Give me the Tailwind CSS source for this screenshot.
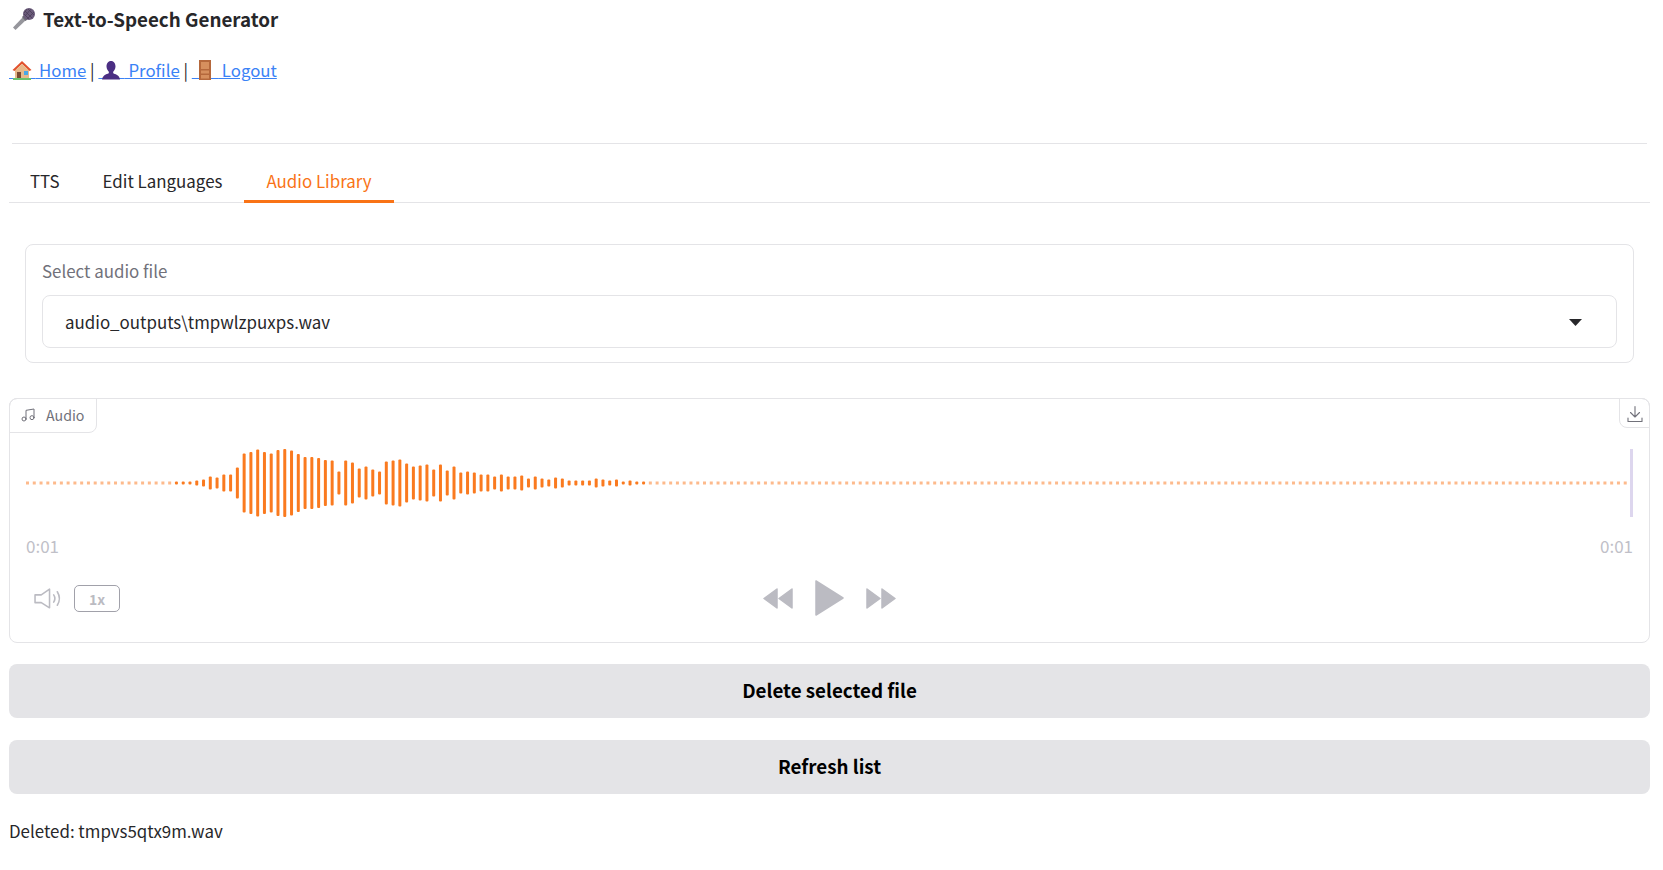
<!DOCTYPE html>
<html lang="en">
<head>
    <meta charset="UTF-8">
    <title>Text-to-Speech Generator</title>
    <script src="https://cdn.jsdelivr.net/npm/@tailwindcss/browser@4"></script>
</head>
<body class="bg-white text-[#27272a] font-['Noto_Sans_CJK_SC','Source_Sans_Pro',sans-serif] text-[16.9px] leading-[24px]">
    <div class="pl-[9px] pr-[13px]">
        <header class="h-[143px]">
            <h1 class="flex items-center h-[37px] pl-[3px] text-[18.8px] font-semibold text-[#27272a]">
                <svg class="w-[24px] h-[24px] mr-[7px]" viewBox="0 0 24 24">
                    <path d="M11 10 L1 20.5 L3.5 23 L14 13 Z" fill="#96969c"/>
                    <path d="M11.5 8.5 L15.5 12.5 L13.5 14 L10 10 Z" fill="#6b6b73"/>
                    <circle cx="17" cy="7" r="6" fill="#6b5b7b"/>
                    <path d="M13 4 L20 11 M16 2 L22 8 M12 7 L17 12 M15 2 L12 6 M19 2 L13 9 M22 5 L15 12" stroke="#4a3f58" stroke-width="0.8"/>
                </svg>
                Text-to-Speech Generator
            </h1>
            <p class="mt-[21px] text-[16.8px] leading-[24px] whitespace-pre"><a href="#" class="text-[#3b82f6] underline"><span class="relative">&nbsp;&nbsp;&nbsp;&nbsp;&nbsp;&nbsp;&nbsp;<svg class="absolute left-[3px] top-[2px] w-[20px] h-[20px]" viewBox="0 0 20 20">
                    <path d="M3 9 H17 V18 H3 Z" fill="#e8b98a"/>
                    <path d="M0.5 10 L10 1 L19.5 10 L17.5 11 L10 4 L2.5 11 Z" fill="#e2512d"/>
                    <path d="M10 4 L3 10.5 H17 Z" fill="#e8b98a"/>
                    <path d="M5 12 H9 V18 H5 Z" fill="#7a4b32"/>
                    <path d="M12 11 H16 V15 H12 Z" fill="#4aa8e8"/>
                    <path d="M1 18 H19 V20 H1 Z" fill="#6cc26c"/>
                </svg></span> Home</a><span> | </span><a href="#" class="text-[#3b82f6] underline"><span class="relative">&nbsp;&nbsp;&nbsp;&nbsp;&nbsp;&nbsp;&nbsp;<svg class="absolute left-[3px] top-[2px] w-[20px] h-[20px]" viewBox="0 0 20 20">
                    <path d="M10 1 C13 1 14.5 3.5 14.5 6.5 C14.5 9 13 11 12 12 L12.5 13.5 C16 14.5 18.5 16 19 19.5 H1 C1.5 16 4 14.5 7.5 13.5 L8 12 C7 11 5.5 9 5.5 6.5 C5.5 3.5 7 1 10 1 Z" fill="#4b2e83"/>
                </svg></span> Profile</a><span> | </span><a href="#" class="text-[#3b82f6] underline"><span class="relative">&nbsp;&nbsp;&nbsp;&nbsp;&nbsp;&nbsp;&nbsp;<svg class="absolute left-[3px] top-[2px] w-[20px] h-[20px]" viewBox="0 0 20 20">
                    <path d="M4 0 H16 V20 H4 Z" fill="#b5683c"/>
                    <path d="M6 2 H14 V9 H6 Z M6 10.5 H14 V13.5 H6 Z M6 15 H14 V18.5 H6 Z" fill="#d68f5e"/>
                </svg></span> Logout</a></p>
        </header>
        <div class="ml-[3px] mr-[3px] h-px bg-[#e4e4e7]"></div>

        <nav class="mt-[19px] h-[40px] flex border-b border-[#e4e4e7]">
            <button class="px-[21px] h-[36px] text-[#27272a]">TTS</button>
            <button class="px-[22px] h-[36px] text-[#27272a]">Edit Languages</button>
            <button class="px-[22px] h-[40px] pb-[2px] text-[#f97316] border-b-[3px] border-[#f97316]">Audio Library</button>
        </nav>

        <section class="mt-[41px] mx-[16px] h-[119px] border border-[#e4e4e7] rounded-[8px] px-[16px] pt-[14px]">
            <label class="block leading-[24px] text-[#71717a]">Select audio file</label>
            <div class="mt-[12px] h-[53px] border border-[#e4e4e7] rounded-[8px] pl-[22px] pr-[34px] flex items-center justify-between text-[#27272a]">
                <span>audio_outputs\tmpwlzpuxps.wav</span>
                <svg class="mt-[2px] w-[13px] h-[7px]" viewBox="0 0 13 7"><path d="M0 0 H13 L6.5 7 Z" fill="#27272a"/></svg>
            </div>
        </section>

        <section class="relative mt-[35px] h-[245px] border border-[#e4e4e7] rounded-[8px]">
            <div class="absolute -left-px -top-px h-[35px] w-[88px] pb-[1px] border border-[#e4e4e7] rounded-tl-[8px] rounded-br-[8px] flex items-center gap-[10px] pl-[10px] text-[14.2px] text-[#71717a]">
                <svg class="w-[16px] h-[16px]" viewBox="0 0 24 24" fill="none" stroke="#71717a" stroke-width="1.5" stroke-linecap="round" stroke-linejoin="round"><path d="M9 18V5l12-2v13"/><circle cx="6" cy="18" r="3"/><circle cx="18" cy="16" r="3"/></svg>
                Audio
            </div>
            <button class="absolute -right-px -top-px h-[30px] w-[31px] pt-[1px] border border-[#e4e4e7] rounded-tr-[8px] rounded-bl-[8px] flex items-center justify-center">
                <svg class="w-[18px] h-[18px]" viewBox="0 0 18 18" fill="none" stroke="#71717a" stroke-width="1.1" stroke-linecap="round" stroke-linejoin="round"><path d="M9 1.5V11.5M4.5 7.5L9 12L13.5 7.5M2 13V16.5H16V13"/></svg>
            </button>

            <div class="mt-[49px] pl-[15px] pr-[15px]">
                <svg id="wave" class="block w-full h-[70px]" width="1609" height="70"></svg>
                <div class="mt-[16px] pl-[1px] pr-[1px] flex justify-between text-[17px] leading-[24px] text-[#c0c0c8]">
                    <span>0:01</span><span>0:01</span>
                </div>
            </div>

            <div class="relative mt-[20px] h-[40px] flex items-center justify-center gap-[21px]">
                <div class="absolute left-[24px] top-[7px] flex items-center gap-[11px]">
                    <svg class="w-[29px] h-[23px]" viewBox="0 0 28 22" fill="none" stroke="#bbbbc2" stroke-width="1.5" stroke-linecap="round" stroke-linejoin="round">
                        <path d="M1 7.5H7L15 2V20L7 15H1Z"/><path d="M19 7.5C20.3 9.5 20.3 12.5 19 14.5"/><path d="M22.5 4.5C25 8.5 25 13.5 22.5 17.5"/>
                    </svg>
                    <button class="w-[46px] h-[27px] border border-[#a1a1aa] rounded-[5px] text-[14px] font-semibold text-[#bbbbc2] flex items-center justify-center">1x</button>
                </div>
                <svg class="w-[31px] h-[21px]" viewBox="0 0 31 21" fill="#bbbbc2" stroke="#bbbbc2" stroke-width="1.5" stroke-linejoin="round"><path d="M14 1V20L1 10.5Z"/><path d="M29 1V20L16 10.5Z"/></svg>
                <svg class="w-[29px] h-[36px]" viewBox="0 0 29 36" fill="#bbbbc2" stroke="#bbbbc2" stroke-width="1.5" stroke-linejoin="round"><path d="M1 1V35L28 18Z"/></svg>
                <svg class="w-[31px] h-[21px]" viewBox="0 0 31 21" fill="#bbbbc2" stroke="#bbbbc2" stroke-width="1.5" stroke-linejoin="round"><path d="M2 1V20L15 10.5Z"/><path d="M17 1V20L30 10.5Z"/></svg>
            </div>
        </section>

        <button class="mt-[21px] w-full h-[54px] pb-[2px] rounded-[8px] bg-[#e4e4e7] text-[18.8px] font-semibold text-black">Delete selected file</button>
        <button class="mt-[22px] w-full h-[54px] pb-[2px] rounded-[8px] bg-[#e4e4e7] text-[18.8px] font-semibold text-black">Refresh list</button>
        <p class="mt-[25px] leading-[24px] text-[#27272a]">Deleted: tmpvs5qtx9m.wav</p>
    </div>

    <script>
        const heights = [3,3,3,5,7,13,11,17,17,31,59,62,67,62,59,66,68,65,58,52,52,50,46,45,23,
            45,41,29,33,27,23,43,45,47,39,33,35,37,27,37,25,33,21,23,21,17,17,13,17,13,13,15,9,13,9,7,11,9,5,5,5,5,9,7,5,7,3,5,3,3];
        const leadDots = 22, tailDots = 145, step = 6.77;
        const midY = 35;
        let rects = '';
        for (let i = 0; i < leadDots + heights.length + tailDots; i++) {
            const x = 1 + i * step;
            const played = i >= leadDots && i < leadDots + heights.length;
            const h = played ? heights[i - leadDots] : 3;
            rects += `<rect x="${x.toFixed(2)}" y="${midY - h / 2}" width="3" height="${h}" rx="${played ? 1 : 0}" fill="${played ? '#fa7a1f' : '#fdba8c'}"/>`;
        }
        rects += '<rect x="1605" y="1" width="3" height="68" fill="#ddd6ee"/>';
        document.getElementById('wave').innerHTML = rects;
    </script>
</body>
</html>
